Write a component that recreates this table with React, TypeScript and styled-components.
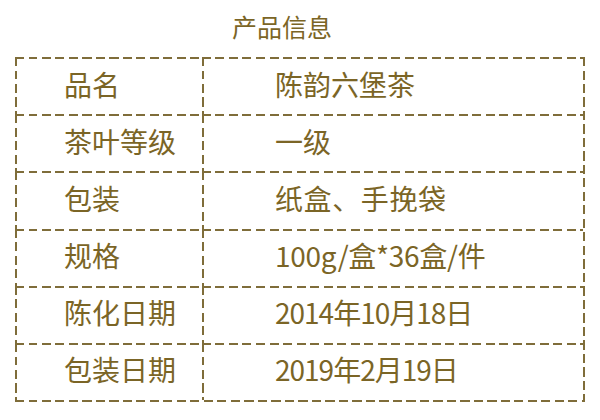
import React from "react";
import styled, { createGlobalStyle } from "styled-components";

const INK = "#7b6526";
const LINE = "#7f6d3a";

const GlobalStyle = createGlobalStyle`
  html, body {
    margin: 0;
    padding: 0;
    background: #ffffff;
  }
  body {
    font-family: "Noto Sans CJK SC", "Noto Sans", sans-serif;
  }
`;

const hDash = `repeating-linear-gradient(90deg, ${LINE} 0 9px, transparent 9px 13.5px)`;
const vDash = `repeating-linear-gradient(180deg, ${LINE} 0 9px, transparent 9px 13.5px)`;

const Page = styled.div`
  width: 600px;
  height: 420px;
  display: flex;
  flex-direction: column;
  align-items: center;
  box-sizing: border-box;
  padding-top: 10px;
`;

const Title = styled.h1`
  margin: 0;
  padding-right: 36px;
  height: 47px;
  font-size: 25px;
  font-weight: 400;
  line-height: 32px;
  color: ${INK};
`;

const Table = styled.div`
  width: 570px;
  height: 345px;
  display: grid;
  grid-template-columns: 187px 1fr;
  grid-template-rows: repeat(6, 1fr);
  box-sizing: border-box;
  padding: 0 2px 2px 0;
  background-image: ${vDash}, ${hDash};
  background-size: 2px 100%, 100% 2px;
  background-position: right top, left bottom;
  background-repeat: no-repeat;
`;

const Cell = styled.div<{ $value?: boolean; $spacing?: number }>`
  display: flex;
  align-items: center;
  box-sizing: border-box;
  padding-left: ${(p) => (p.$value ? "73px" : "49px")};
  padding-bottom: 4px;
  font-size: 28px;
  letter-spacing: ${(p) => p.$spacing ?? 0}px;
  color: ${INK};
  white-space: nowrap;
  background-image: ${hDash}, ${vDash};
  background-size: 100% 2px, 2px 100%;
  background-position: left top, left top;
  background-repeat: no-repeat;
`;

const rows: { label: string; value: string; spacing?: number }[] = [
  { label: "品名", value: "陈韵六堡茶" },
  { label: "茶叶等级", value: "一级" },
  { label: "包装", value: "纸盒、手挽袋", spacing: 0.6 },
  { label: "规格", value: "100g/盒*36盒/件", spacing: -0.3 },
  { label: "陈化日期", value: "2014年10月18日", spacing: -1 },
  { label: "包装日期", value: "2019年2月19日", spacing: -1 },
];

const App: React.FC = () => {
  return (
    <>
      <GlobalStyle />
      <Page>
        <Title>产品信息</Title>
        <Table>
          {rows.map((row) => (
            <React.Fragment key={row.label}>
              <Cell>{row.label}</Cell>
              <Cell $value $spacing={row.spacing}>
                {row.value}
              </Cell>
            </React.Fragment>
          ))}
        </Table>
      </Page>
    </>
  );
};

export default App;
